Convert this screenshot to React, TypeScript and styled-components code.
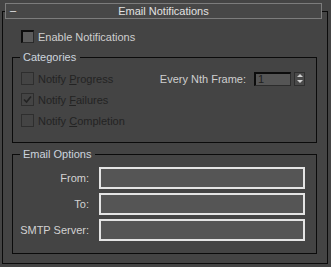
import React from "react";
import styled, { createGlobalStyle, css } from "styled-components";

const BG = "#444444";
const FONT = `"Liberation Sans", Arial, sans-serif`;

const GlobalStyle = createGlobalStyle`
	html, body {
		margin: 0;
		padding: 0;
		background: ${BG};
	}
	body {
		font-family: ${FONT};
		font-size: 11px;
	}
`;

const Page = styled.div`
	width: 331px;
	height: 267px;
	box-sizing: border-box;
	padding: 11px 0 0 2px;
	background: ${BG};
	overflow: hidden;
`;

const Rollout = styled.div`
	width: 326px;
	height: 253px;
	box-sizing: border-box;
	border: 1px solid #0b0b0b;
	display: flex;
	flex-direction: column;
`;

const Header = styled.div`
	position: relative;
	margin: -9px 0 0 2px;
	width: 317px;
	height: 16px;
	box-sizing: border-box;
	border: 1px solid #7c7c7c;
	background: #474747;
	display: flex;
	align-items: center;
	justify-content: center;
	color: #e2e2e2;
`;

const Collapse = styled.span`
	position: absolute;
	left: 4px;
	top: 0;
	line-height: 13px;
	color: #e8e8e8;
`;

const Body = styled.div`
	display: flex;
	flex-direction: column;
	padding: 7px 0 0 9px;
`;

const CheckRow = styled.label<{ disabled?: boolean }>`
	display: flex;
	align-items: center;
	height: 21px;
	gap: 4px;
	color: ${(p) => (p.disabled ? "#232323" : "#cfcfcf")};
`;

const Box = styled.span<{ disabled?: boolean }>`
	width: 13px;
	height: 13px;
	box-sizing: border-box;
	display: inline-flex;
	align-items: center;
	justify-content: center;
	${(p) =>
		p.disabled
			? css`
					border: 1px solid #2e2e2e;
					background: #444;
			  `
			: css`
					border-top: 2px solid #0e0e0e;
					border-left: 2px solid #0e0e0e;
					border-right: 1px solid #2a2a2a;
					border-bottom: 1px solid #2a2a2a;
					background: #5c5c5c;
			  `}
`;

const U = styled.span`
	text-decoration: underline;
`;

const EnableRow = styled.div`
	padding-left: 9px;
`;

const Group = styled.div<{ top: number }>`
	position: relative;
	width: 305px;
	box-sizing: border-box;
	border: 1px solid #0b0b0b;
	margin-top: ${(p) => p.top}px;
`;

const GroupTitle = styled.span`
	position: absolute;
	top: -8px;
	left: 7px;
	padding: 0 4px 0 3px;
	background: ${BG};
	color: #cdd4de;
	line-height: 14px;
`;

const CatInner = styled.div`
	display: flex;
	justify-content: space-between;
	padding: 10px 11px 11px 8px;
`;

const CheckList = styled.div`
	display: flex;
	flex-direction: column;
`;

const FrameRow = styled.div`
	display: flex;
	align-items: center;
	height: 21px;
	color: #cfcfcf;
`;

const SpinField = styled.div`
	margin-left: 8px;
	width: 37px;
	height: 14px;
	box-sizing: border-box;
	border-top: 2px solid #0c0c0c;
	border-left: 2px solid #0c0c0c;
	border-right: 1px solid #2c2c2c;
	border-bottom: 1px solid #2c2c2c;
	background: #555;
	color: #202020;
	line-height: 11px;
	padding-left: 2px;
`;

const SpinButtons = styled.div`
	margin-left: 3px;
	width: 11px;
	height: 14px;
	box-sizing: border-box;
	border: 1px solid #2e2e2e;
	background: #4a4a4a;
	display: flex;
	flex-direction: column;
	align-items: center;
	justify-content: space-around;
`;

const Arrow = styled.span<{ down?: boolean }>`
	width: 0;
	height: 0;
	border-left: 3px solid transparent;
	border-right: 3px solid transparent;
	${(p) =>
		p.down
			? css`border-top: 3px solid #d0d0d0;`
			: css`border-bottom: 3px solid #d0d0d0;`}
`;

const FormGrid = styled.div`
	display: grid;
	grid-template-columns: 76px 206px;
	column-gap: 10px;
	row-gap: 4px;
	padding: 12px 10px 12px 0;
	align-items: center;
`;

const FieldLabel = styled.span`
	text-align: right;
	color: #d2d2d2;
`;

const Field = styled.div`
	height: 22px;
	box-sizing: border-box;
	border: 2px solid #e4e4e4;
	background: #555555;
`;

function Check({
	label,
	checked,
	disabled,
}: {
	label: React.ReactNode;
	checked?: boolean;
	disabled?: boolean;
}) {
	return (
		<CheckRow disabled={disabled}>
			<Box disabled={disabled}>
				{checked && (
					<svg width="9" height="9" viewBox="0 0 9 9">
						<path d="M1 4.5 L3.5 7 L8 1.5" stroke="#232323" strokeWidth="1.6" fill="none" />
					</svg>
				)}
			</Box>
			{label}
		</CheckRow>
	);
}

export default function App() {
	return (
		<Page>
			<GlobalStyle />
			<Rollout>
				<Header>
					<Collapse>–</Collapse>
					Email Notifications
				</Header>
				<Body>
					<EnableRow>
						<Check label="Enable Notifications" />
					</EnableRow>
					<Group top={10}>
						<GroupTitle>Categories</GroupTitle>
						<CatInner>
							<CheckList>
								<Check disabled label={<span>Notify <U>P</U>rogress</span>} />
								<Check disabled checked label={<span>Notify <U>F</U>ailures</span>} />
								<Check disabled label={<span>Notify <U>C</U>ompletion</span>} />
							</CheckList>
							<div>
								<FrameRow>
									Every Nth Frame:
									<SpinField>1</SpinField>
									<SpinButtons>
										<Arrow />
										<Arrow down />
									</SpinButtons>
								</FrameRow>
							</div>
						</CatInner>
					</Group>
					<Group top={11}>
						<GroupTitle>Email Options</GroupTitle>
						<FormGrid>
							<FieldLabel>From:</FieldLabel>
							<Field />
							<FieldLabel>To:</FieldLabel>
							<Field />
							<FieldLabel>SMTP Server:</FieldLabel>
							<Field />
						</FormGrid>
					</Group>
				</Body>
			</Rollout>
		</Page>
	);
}
